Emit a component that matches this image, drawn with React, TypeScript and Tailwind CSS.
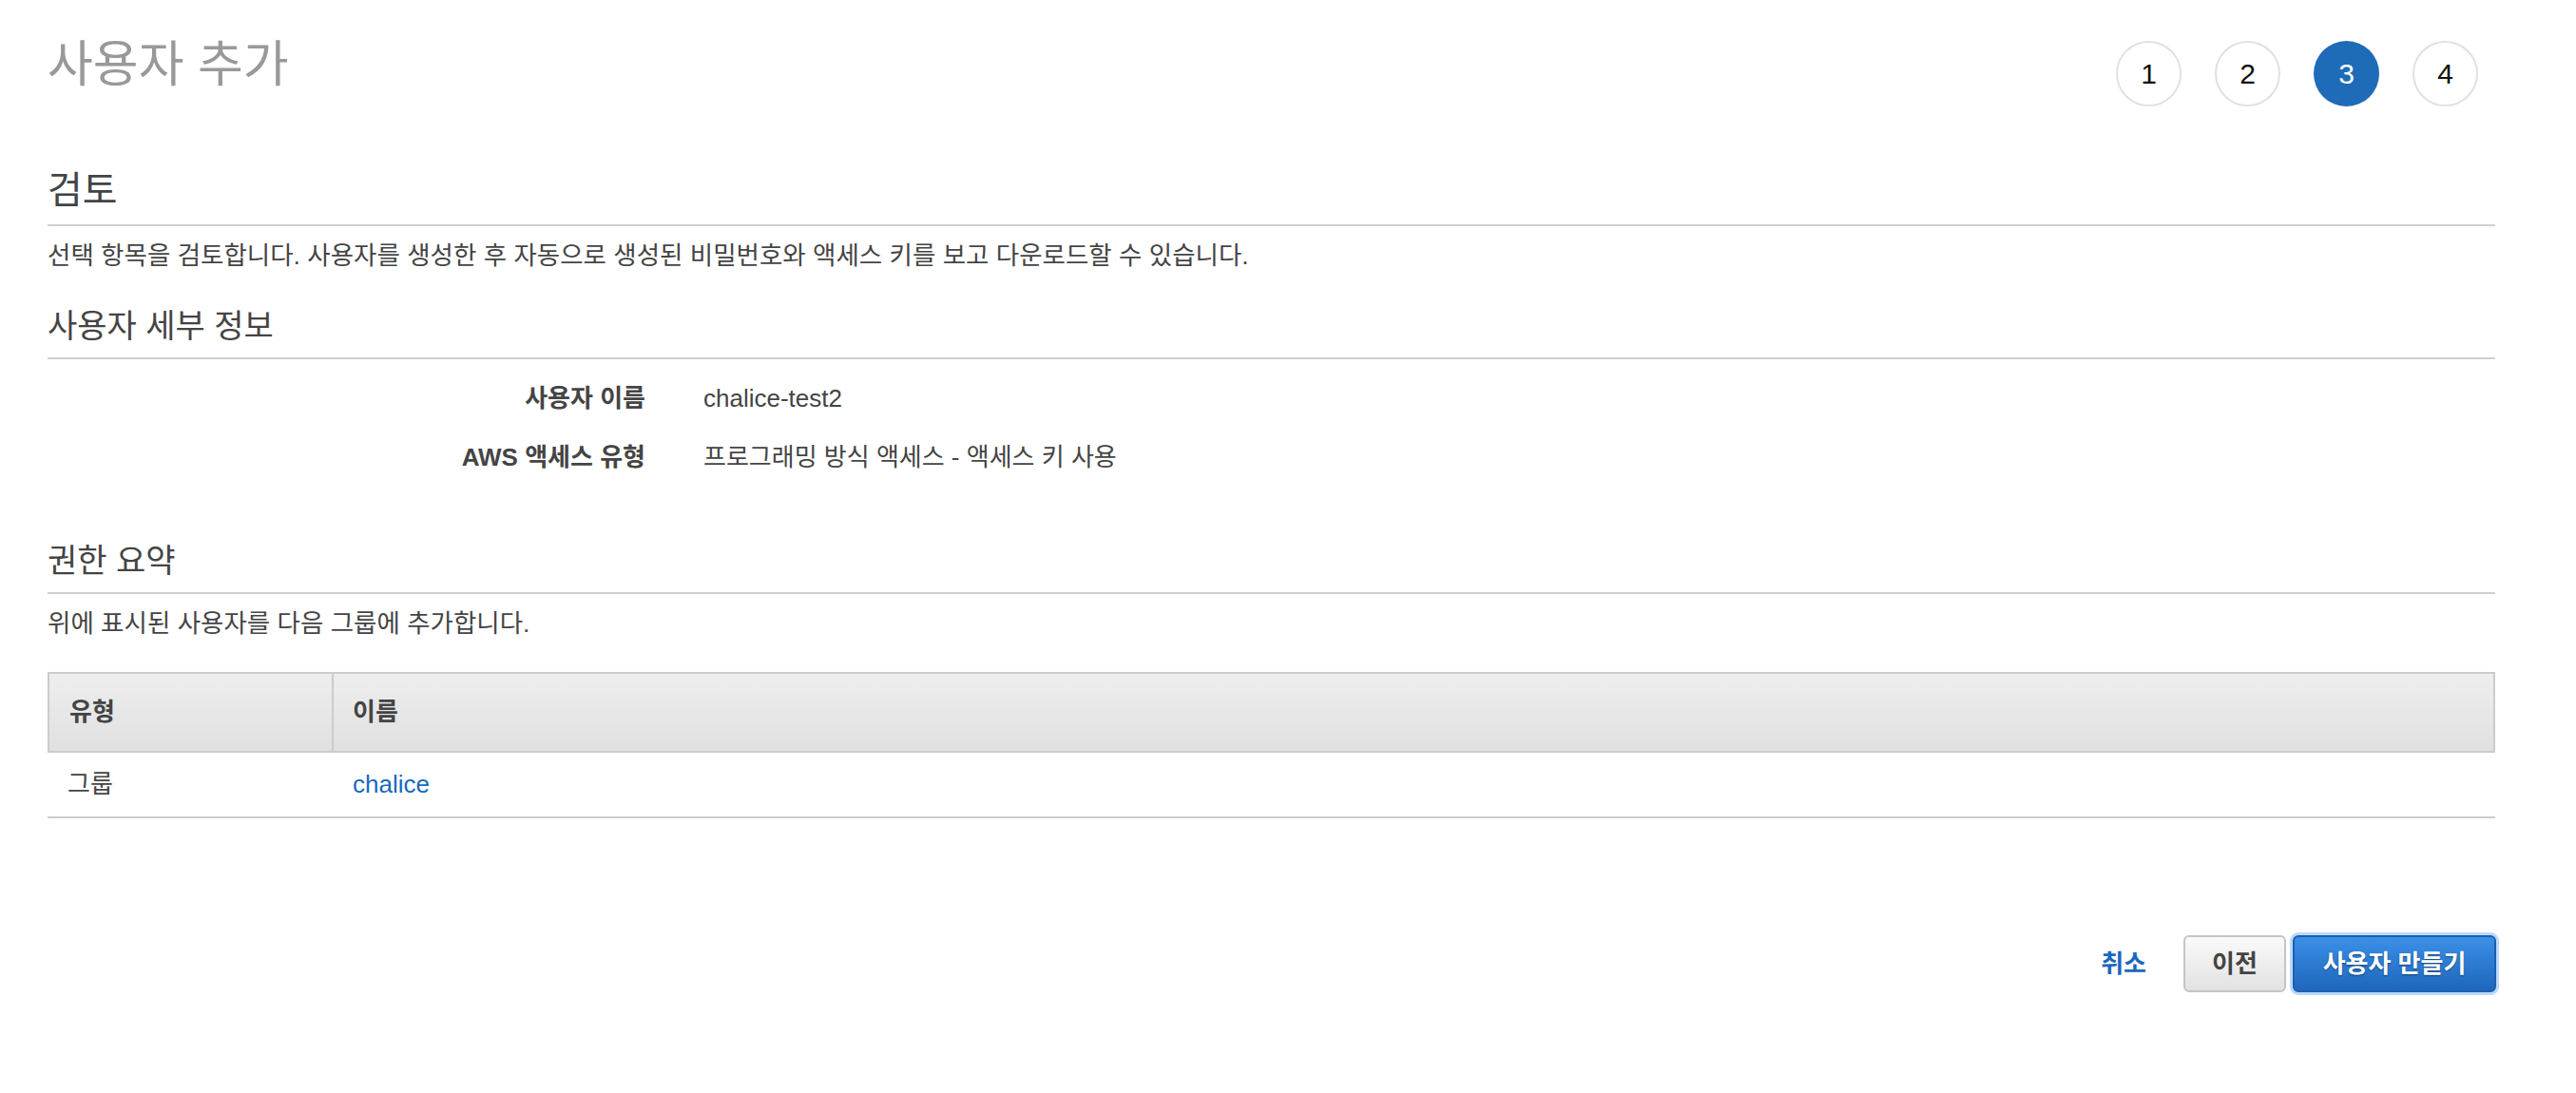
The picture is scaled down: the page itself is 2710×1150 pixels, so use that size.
import React from "react";

const FONT = '"Liberation Sans", "Noto Sans CJK KR", Arial, sans-serif';

function Step({ n, active }: { n: number; active?: boolean }) {
  return (
    <div
      className={
        active
          ? "flex h-[69px] w-[69px] items-center justify-center rounded-full bg-[#1e6bb8] text-[30px] text-white"
          : "flex h-[69px] w-[69px] items-center justify-center rounded-full border-2 border-[#e1e1e1] bg-white text-[30px] text-[#111]"
      }
    >
      {n}
    </div>
  );
}

export default function App() {
  return (
    <div
      className="min-h-[1150px] w-full bg-white pl-[50px] pr-[85px] text-[#444]"
      style={{ fontFamily: FONT }}
    >
      {/* Header */}
      <div className="flex h-[112px] items-start justify-between">
        <h1 className="mt-[37px] text-[52px] font-normal leading-[62px] text-[#999]">사용자 추가</h1>
        <div className="mt-[43px] flex gap-[35px] pr-[18px]">
          <Step n={1} />
          <Step n={2} />
          <Step n={3} active />
          <Step n={4} />
        </div>
      </div>

      {/* 검토 */}
      <h2 className="mt-[64px] border-b-2 border-[#cfcfcf] pb-[12px] text-[40px] font-normal leading-[48px] text-[#444]">
        검토
      </h2>
      <p className="mt-[13px] text-[26.5px] leading-[36px] text-[#444]">
        선택 항목을 검토합니다. 사용자를 생성한 후 자동으로 생성된 비밀번호와 액세스 키를 보고 다운로드할 수 있습니다.
      </p>

      {/* 사용자 세부 정보 */}
      <h3 className="mt-[34px] border-b-2 border-[#cfcfcf] pb-[11px] text-[34px] font-normal leading-[44px] text-[#444]">
        사용자 세부 정보
      </h3>
      <div className="mt-[10px] flex flex-col">
        <div className="flex h-[62px] items-center gap-[61px] text-[26px]">
          <div className="w-[629px] text-right font-bold">사용자 이름</div>
          <div>chalice-test2</div>
        </div>
        <div className="flex h-[62px] items-center gap-[61px] text-[26px]">
          <div className="w-[629px] text-right font-bold">AWS 액세스 유형</div>
          <div>프로그래밍 방식 액세스 - 액세스 키 사용</div>
        </div>
      </div>

      {/* 권한 요약 */}
      <h3 className="mt-[56px] border-b-2 border-[#cfcfcf] pb-[11px] text-[34px] font-normal leading-[44px] text-[#444]">
        권한 요약
      </h3>
      <p className="mt-[13px] text-[26.5px] leading-[36px] text-[#444]">위에 표시된 사용자를 다음 그룹에 추가합니다.</p>

      <div className="mt-[33px]">
        <div className="flex h-[85px] border-2 border-[#cccccc] bg-gradient-to-b from-[#eeeeee] to-[#e0e0e0] text-[26px] font-bold">
          <div className="flex w-[299px] items-center border-r-2 border-[#cccccc] pl-[21px]">유형</div>
          <div className="flex flex-1 items-center pl-[20px]">이름</div>
        </div>
        <div className="flex h-[69px] border-b-2 border-[#cccccc] text-[26px]">
          <div className="flex w-[301px] items-center pl-[21px]">그룹</div>
          <div className="flex flex-1 items-center pl-[20px]">
            <a className="text-[#1a68bd]">chalice</a>
          </div>
        </div>
      </div>

      {/* Buttons */}
      <div className="-mr-[4px] mt-[120px] flex items-center justify-end">
        <a className="mr-[39px] text-[26px] font-bold text-[#1a68bd]">취소</a>
        <button className="h-[60px] w-[108px] rounded-[6px] border-2 border-[#c4c4c4] bg-gradient-to-b from-[#fafafa] to-[#e2e2e2] text-[26px] font-bold text-[#444]">
          이전
        </button>
        <div className="ml-[4px] rounded-[9px] bg-[#b9d9fb] p-[3px]">
          <button
            className="h-[60px] w-[214px] rounded-[6px] border-2 border-[#1d5fae] bg-gradient-to-b from-[#3b90e8] to-[#1f66bd] text-[26px] font-bold text-white"
            style={{ textShadow: "0 1px 2px rgba(0,0,0,0.45)" }}
          >
            사용자 만들기
          </button>
        </div>
      </div>
    </div>
  );
}
